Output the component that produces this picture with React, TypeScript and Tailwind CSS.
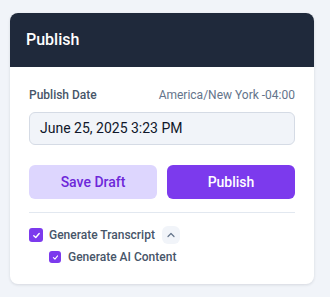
import React from "react";

function Check({ size }: { size: number }) {
  return (
    <span
      className="flex shrink-0 items-center justify-center rounded-[3px] bg-[#7c3aed]"
      style={{ width: size, height: size }}
    >
      <svg width={size - 5} height={size - 5} viewBox="0 0 10 10" fill="none">
        <path d="M2 5.2 L4.2 7.2 L8 2.8" stroke="white" strokeWidth="1.6" strokeLinecap="round" strokeLinejoin="round" />
      </svg>
    </span>
  );
}

export default function App() {
  return (
    <div
      className="min-h-[297px] w-[330px] bg-[#f1f4f9] pl-[10px] pt-[13px]"
      style={{ fontFamily: "Roboto, 'Noto Sans', sans-serif" }}
    >
      <div className="w-[304px] overflow-hidden rounded-lg bg-white shadow-[0_1px_3px_rgba(15,23,42,0.12)]">
        <div className="flex h-[54px] items-center bg-[#1f293b] px-4">
          <span className="text-[16px] font-medium text-white">Publish</span>
        </div>
        <div className="px-[19px] pb-[19px] pt-[20px]">
          <div className="flex items-center justify-between leading-4">
            <span className="text-[12px] font-medium text-[#475569]">Publish Date</span>
            <span className="text-[12px] text-[#64748b]">America/New York -04:00</span>
          </div>
          <div className="mt-[9px] flex h-[33px] items-center rounded-md border border-[#d5dbe5] bg-[#f1f4f9] px-[10px] text-[14px] text-[#0f172a]">
            June 25, 2025 3:23 PM
          </div>
          <div className="mt-5 flex gap-[10px]">
            <button className="h-[34px] flex-1 rounded-md bg-[#ddd6fe] text-[14px] font-medium text-[#6d28d9]">
              Save Draft
            </button>
            <button className="h-[34px] flex-1 rounded-md bg-[#7c3aed] text-[14px] font-medium text-white">
              Publish
            </button>
          </div>
          <div className="mt-[13px] border-t border-[#e2e8f0]" />
          <div className="mt-[13px] flex h-[18px] items-center">
            <Check size={14} />
            <span className="ml-[6px] text-[12px] font-medium leading-4 text-[#475569]">Generate Transcript</span>
            <span className="ml-[7px] flex h-[18px] w-[18px] items-center justify-center rounded-md bg-[#f1f4f9]">
              <svg width="10" height="10" viewBox="0 0 10 10" fill="none">
                <path d="M2 6.5 L5 3.5 L8 6.5" stroke="#64748b" strokeWidth="1.2" strokeLinecap="round" strokeLinejoin="round" />
              </svg>
            </span>
          </div>
          <div className="ml-5 mt-[5px] flex h-4 items-center">
            <Check size={12} />
            <span className="ml-[7px] text-[12px] font-medium leading-4 text-[#475569]">Generate AI Content</span>
          </div>
        </div>
      </div>
    </div>
  );
}
